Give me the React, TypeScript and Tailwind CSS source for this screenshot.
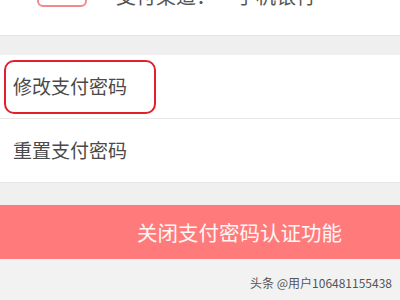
export default function App() {
  const font = { fontFamily: '"Noto Sans CJK SC", "Noto Sans", sans-serif' };
  return (
    <div
      className="relative w-[400px] h-[300px] overflow-hidden bg-[#f3f2f2]"
      style={font}
    >
      {/* top partially visible row */}
      <div className="h-[35px] bg-white overflow-hidden">
        <div className="flex items-center -mt-[23px] h-[30px] pl-[37px]">
          <div className="w-[50px] h-[30px] border-[2px] border-[#f08a8e] rounded-[6px] shrink-0" />
          <div className="ml-[29px] text-[20px] leading-[30px] text-[#555] whitespace-nowrap mt-[7px]">
            支付渠道：<span className="ml-[20px]">手机银行</span>
          </div>
        </div>
      </div>
      {/* gray gap */}
      <div className="h-[20px] bg-[#efefef] border-t border-[#e6e6e6]" />
      {/* list */}
      <div className="bg-white">
        <div className="h-[64px] flex items-center pl-[4px] border-b border-[#e8e8e8]">
          <div className="w-[152px] h-[54px] border-[2.5px] border-[#e0202c] rounded-[10px] flex items-center pl-[7px] text-[19px] text-[#4a4a4a]">
            修改支付密码
          </div>
        </div>
        <div className="h-[63px] flex items-center pl-[13px] text-[19px] text-[#4a4a4a]">
          重置支付密码
        </div>
      </div>
      {/* gray gap */}
      <div className="h-[23px] bg-[#f0f0f0] border-t border-[#e6e6e6]" />
      {/* button */}
      <div className="h-[54px] bg-[#ff7b7b] flex items-center pl-[137px] text-[20.5px] text-[#fff6f6]">
        关闭支付密码认证功能
      </div>
      {/* watermark */}
      <div className="absolute right-[8px] bottom-[8px] text-[12px] text-[#555]">
        头条 @用户106481155438
      </div>
    </div>
  );
}
